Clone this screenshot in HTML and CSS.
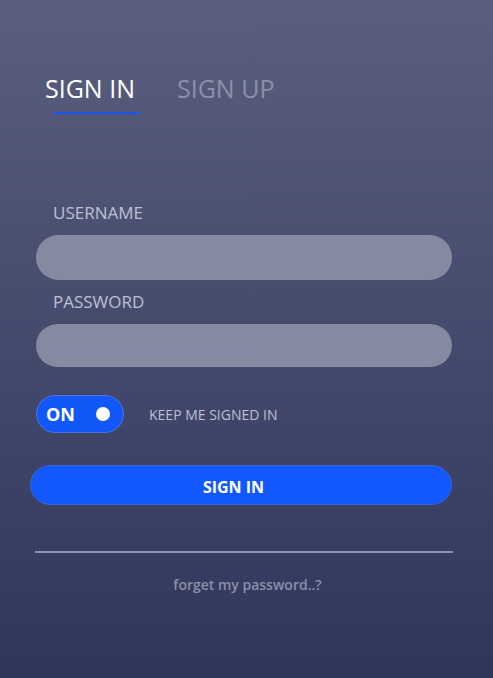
FILE: index.html
```html
<!DOCTYPE html>
<html>
<head>
<meta charset="utf-8">
<link rel="stylesheet" href="styles.css">
</head>
<body>
<div class="page">
  <div class="tabs">
    <div class="tab active">SIGN IN</div>
    <div class="tab">SIGN UP</div>
  </div>
  <form class="form">
    <label class="label">USERNAME</label>
    <div class="input input-user"></div>
    <label class="label label-pass">PASSWORD</label>
    <div class="input input-pass"></div>
    <div class="keep">
      <div class="toggle"><span class="toggle-text">ON</span><span class="knob"></span></div>
      <span class="keep-text">KEEP ME SIGNED IN</span>
    </div>
    <div class="btn">SIGN IN</div>
    <div class="hr"></div>
    <div class="forgot">forget my password..?</div>
  </form>
</div>
</body>
</html>
```
FILE: styles.css
```css
html, body {
  margin: 0;
  padding: 0;
}
body {
  width: 493px;
  height: 678px;
  background: linear-gradient(to bottom, #5a5f7f 0%, #2f365b 100%);
  font-family: "Open Sans", "Liberation Sans", sans-serif;
  overflow: hidden;
}
.page {
  padding: 73px 41px 0 36px;
}
.tabs {
  display: flex;
  gap: 42px;
  padding-left: 9px;
}
.tab {
  font-size: 25px;
  line-height: 30px;
  color: #8b8fa8;
  padding-bottom: 11px;
  position: relative;
}
.tab.active {
  color: #ffffff;
}
.tab.active::after {
  content: "";
  position: absolute;
  left: 8px;
  right: -5px;
  bottom: 0;
  height: 2px;
  background: #1a56f0;
}
.form {
  display: flex;
  flex-direction: column;
  margin-top: 87px;
}
.label {
  display: block;
  font-size: 17px;
  line-height: 24px;
  color: #bcc0d2;
  padding-left: 17px;
}
.input {
  margin-top: 10px;
  height: 45px;
  border-radius: 23px;
  background: #858aa0;
}
.input-pass {
  height: 43px;
  margin-top: 10px;
}
.label-pass {
  margin-top: 10px;
}
.keep {
  display: flex;
  align-items: center;
  margin-top: 28px;
}
.toggle {
  box-sizing: border-box;
  width: 88px;
  height: 38px;
  border-radius: 19px;
  background: #1258f9;
  border: 1px solid #4f74d6;
  display: flex;
  align-items: center;
  justify-content: space-between;
  padding: 0 13px 0 9px;
}
.toggle-text {
  font-size: 18px;
  font-weight: 700;
  color: #ffffff;
  line-height: 1;
}
.knob {
  width: 14px;
  height: 14px;
  border-radius: 50%;
  background: #ffffff;
}
.keep-text {
  margin-left: 25px;
  font-size: 14px;
  color: #bcc0d2;
}
.btn {
  margin: 32px 0 0 -6px;
  padding: 4px 15px 0 0;
  height: 40px;
  border-radius: 20px;
  background: #1358fe;
  border: 1px solid #3b64c9;
  box-sizing: border-box;
  color: #ffffff;
  font-size: 16px;
  font-weight: 700;
  display: flex;
  align-items: center;
  justify-content: center;
}
.hr {
  margin: 46px -1px 0 -1px;
  height: 2px;
  background: #8e92aa;
}
.forgot {
  margin-top: 22px;
  text-align: center;
  font-size: 14px;
  font-weight: 600;
  color: #8a8fa8;
  padding-left: 7px;
}
```
